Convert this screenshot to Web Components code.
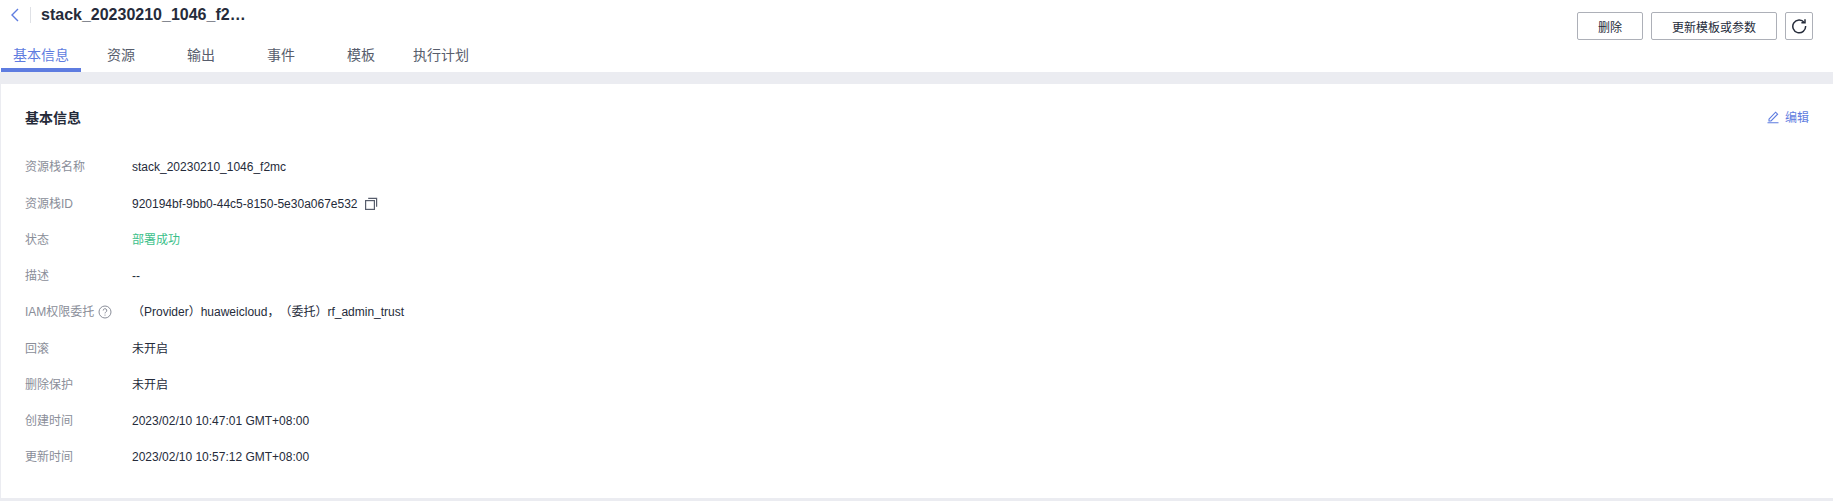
<!DOCTYPE html>
<html lang="zh">
<head>
<meta charset="utf-8">
<style>
  html, body { margin: 0; height: 100%; }
  body {
    background: #ebecf1;
    color: #252b3a;
    font: 12px "Liberation Sans", "Noto Sans CJK SC", sans-serif;
    text-spacing-trim: space-all;
  }
</style>
</head>
<body>
<stack-page>
  <stack-header slot="header"></stack-header>
  <info-card slot="content">
    <info-row label="资源栈名称">stack_20230210_1046_f2mc</info-row>
    <info-row label="资源栈ID">920194bf-9bb0-44c5-8150-5e30a067e532<copy-icon></copy-icon></info-row>
    <info-row label="状态"><span style="color:#3bbf8a">部署成功</span></info-row>
    <info-row label="描述">--</info-row>
    <info-row label="IAM权限委托" help>（Provider）huaweicloud，（委托）rf_admin_trust</info-row>
    <info-row label="回滚">未开启</info-row>
    <info-row label="删除保护">未开启</info-row>
    <info-row label="创建时间">2023/02/10 10:47:01 GMT+08:00</info-row>
    <info-row label="更新时间">2023/02/10 10:57:12 GMT+08:00</info-row>
  </info-card>
</stack-page>

<script>
class StackPage extends HTMLElement {
  constructor() {
    super();
    const shadow = this.attachShadow({mode: 'open'});
    shadow.innerHTML = `
      <style>
        :host { display: block; }
        .content { padding: 12px 0 3px 1px; }
      </style>
      <slot name="header"></slot>
      <div class="content"><slot name="content"></slot></div>
    `;
  }
}
customElements.define('stack-page', StackPage);

class StackHeader extends HTMLElement {
  constructor() {
    super();
    const shadow = this.attachShadow({mode: 'open'});
    shadow.innerHTML = `
      <style>
        :host {
          display: flex;
          justify-content: space-between;
          height: 72px;
          background: #fff;
          box-sizing: border-box;
        }
        .left { display: flex; flex-direction: column; justify-content: space-between; }
        .title-row { display: flex; align-items: center; height: 30px; }
        .back { display: block; margin-left: 10px; }
        .divider { width: 1px; height: 16px; background: #dfe1e6; margin: 0 10px 0 10px; }
        h1 {
          margin: 0;
          font-size: 16px;
          line-height: 30px;
          font-weight: 700;
          color: #252b3a;
          white-space: nowrap;
        }
        nav { display: flex; padding-left: 1px; }
        nav a {
          width: 80px;
          height: 36px;
          box-sizing: border-box;
          padding-top: 9px;
          text-align: center;
          font-size: 14px;
          line-height: 20px;
          color: #575d6c;
        }
        nav a.active { color: #5e7ce0; border-bottom: 4px solid #5e7ce0; }
        .actions { display: flex; gap: 8px; padding: 12px 20px 0 0; }
        button {
          height: 28px;
          box-sizing: border-box;
          padding: 0;
          background: #fff;
          border: 1px solid #adb0b8;
          border-radius: 2px;
          color: #252b3a;
          font: inherit;
        }
        .del { width: 66px; }
        .upd { width: 126px; }
        .ref { width: 28px; display: flex; align-items: center; justify-content: center; }
      </style>
      <div class="left">
        <div class="title-row">
          <svg class="back" width="10" height="16" viewBox="0 0 10 16" fill="none" stroke="#5e7ce0" stroke-width="1.4"><path d="M8 2 2 8l6 6"/></svg>
          <div class="divider"></div>
          <h1>stack_20230210_1046_f2…</h1>
        </div>
        <nav>
          <a class="active">基本信息</a><a>资源</a><a>输出</a><a>事件</a><a>模板</a><a>执行计划</a>
        </nav>
      </div>
      <div class="actions">
        <button class="del">删除</button>
        <button class="upd">更新模板或参数</button>
        <button class="ref" aria-label="刷新">
          <svg width="16" height="16" viewBox="0 0 16 16" fill="none" stroke="#252b3a" stroke-width="1.5"><path d="M13.2 4.4A6.4 6.4 0 1 0 14.6 8"/><path d="M14 1.2v3.6h-3.6"/></svg>
        </button>
      </div>
    `;
  }
}
customElements.define('stack-header', StackHeader);

class InfoCard extends HTMLElement {
  constructor() {
    super();
    const shadow = this.attachShadow({mode: 'open'});
    shadow.innerHTML = `
      <style>
        :host {
          display: block;
          height: 414px;
          box-sizing: border-box;
          background: #fff;
          padding: 24px 24px 0 24px;
        }
        .head { display: flex; justify-content: space-between; align-items: center; height: 20px; margin-bottom: 21.3px; }
        h2 { margin: 0; font-size: 14px; line-height: 20px; font-weight: 700; color: #252b3a; }
        .edit { display: flex; align-items: center; gap: 5px; color: #5e7ce0; margin-top: -3px; }
        .rows { display: flex; flex-direction: column; }
      </style>
      <div class="head">
        <h2>基本信息</h2>
        <span class="edit">
          <svg width="14" height="14" viewBox="0 0 14 14" fill="none" stroke="#5e7ce0" stroke-width="1.1"><path d="M3 9.2 9.6 2.2l2 2L5 11H3zM1.5 12.7h11"/></svg>
          编辑
        </span>
      </div>
      <div class="rows"><slot></slot></div>
    `;
  }
}
customElements.define('info-card', InfoCard);

class InfoRow extends HTMLElement {
  constructor() {
    super();
    const shadow = this.attachShadow({mode: 'open'});
    shadow.innerHTML = `
      <style>
        :host {
          display: flex;
          align-items: center;
          height: 36.25px;
          line-height: 16px;
        }
        .label { width: 107px; flex: none; display: flex; align-items: center; gap: 4px; color: #8a8e99; }
        .value { display: flex; align-items: center; color: #252b3a; white-space: nowrap; }
      </style>
      <div class="label"><span></span></div>
      <div class="value"><slot></slot></div>
    `;
  }

  connectedCallback() {
    const label = this.shadowRoot.querySelector('.label');
    label.firstElementChild.textContent = this.getAttribute('label');
    if (this.hasAttribute('help')) {
      label.insertAdjacentHTML('beforeend', `
        <svg width="14" height="14" viewBox="0 0 14 14" fill="none" stroke="#8a8e99"><circle cx="7" cy="7" r="6"/><path d="M5.2 5.5a1.8 1.8 0 1 1 2.6 1.6c-.6.3-.8.6-.8 1.3M7 9.6v1"/></svg>`);
    }
  }
}
customElements.define('info-row', InfoRow);

class CopyIcon extends HTMLElement {
  constructor() {
    super();
    const shadow = this.attachShadow({mode: 'open'});
    shadow.innerHTML = `
      <style>:host { display: inline-flex; margin-left: 6px; }</style>
      <svg width="14" height="14" viewBox="0 0 14 14" fill="none" stroke="#575d6c" stroke-width="1.2"><rect x="1.6" y="3.6" width="8.8" height="8.8"/><path d="M4.2 1.4h8.4v8.4"/></svg>
    `;
  }
}
customElements.define('copy-icon', CopyIcon);
</script>
</body>
</html>
